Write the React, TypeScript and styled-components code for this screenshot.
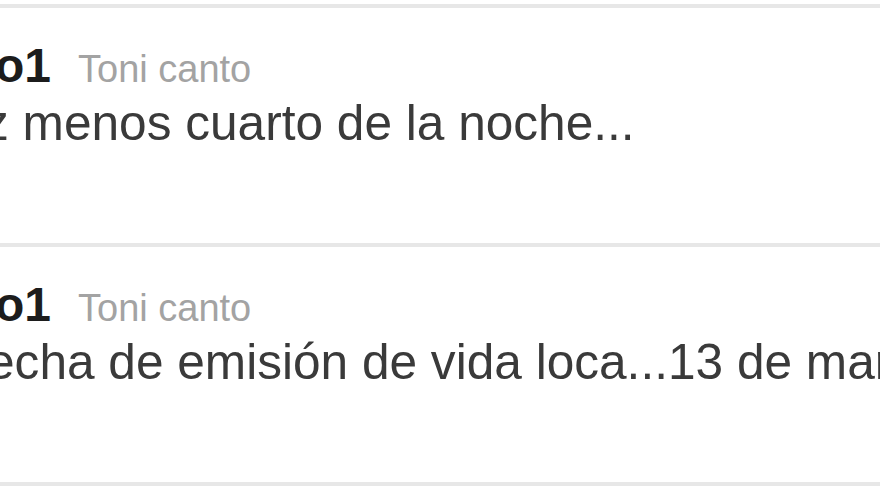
import React from "react";
import styled, { createGlobalStyle } from "styled-components";

const GlobalStyle = createGlobalStyle`
  html, body {
    margin: 0;
    padding: 0;
    background: #ffffff;
  }
  body {
    font-family: "Liberation Sans", Arial, sans-serif;
  }
`;

const Timeline = styled.div`
  width: 880px;
  height: 495px;
  overflow: hidden;
  padding-top: 4px;
  box-sizing: border-box;
  background: #ffffff;
  display: flex;
  flex-direction: column;
`;

const Tweet = styled.div`
  box-sizing: border-box;
  flex: 0 0 239px;
  border-top: 4px solid #e7e7e7;
  padding-top: 33px;
  display: flex;
  flex-direction: column;
  overflow: hidden;
  &:last-child {
    flex-basis: 243px;
    border-bottom: 4px solid #e7e7e7;
  }
`;

const Header = styled.div<{ $shift: number }>`
  display: flex;
  align-items: baseline;
  height: 50px;
  line-height: 50px;
  margin-left: ${(p) => p.$shift}px;
  white-space: nowrap;
`;

const ScreenName = styled.span`
  font-size: 48px;
  font-weight: 700;
  color: #1c1c1c;
`;

const FullName = styled.span`
  font-size: 38px;
  color: #a3a3a3;
  margin-left: 27px;
`;

const Body = styled.div<{ $shift: number }>`
  margin-top: 4px;
  font-size: 49.6px;
  line-height: 56px;
  color: #3a3a3a;
  white-space: nowrap;
  margin-left: ${(p) => p.$shift}px;
`;

const tweets = [
  {
    screen: "o1",
    name: "Toni canto",
    text: "z menos cuarto de la noche...",
    shift: -16,
  },
  {
    screen: "o1",
    name: "Toni canto",
    text: "echa de emisión de vida loca...13 de marzo",
    shift: -13,
  },
];

export default function App() {
  return (
    <>
      <GlobalStyle />
      <Timeline>
        {tweets.map((t, i) => (
          <Tweet key={i}>
            <Header $shift={-5}>
              <ScreenName>{t.screen}</ScreenName>
              <FullName>{t.name}</FullName>
            </Header>
            <Body $shift={t.shift}>{t.text}</Body>
          </Tweet>
        ))}
      </Timeline>
    </>
  );
}
